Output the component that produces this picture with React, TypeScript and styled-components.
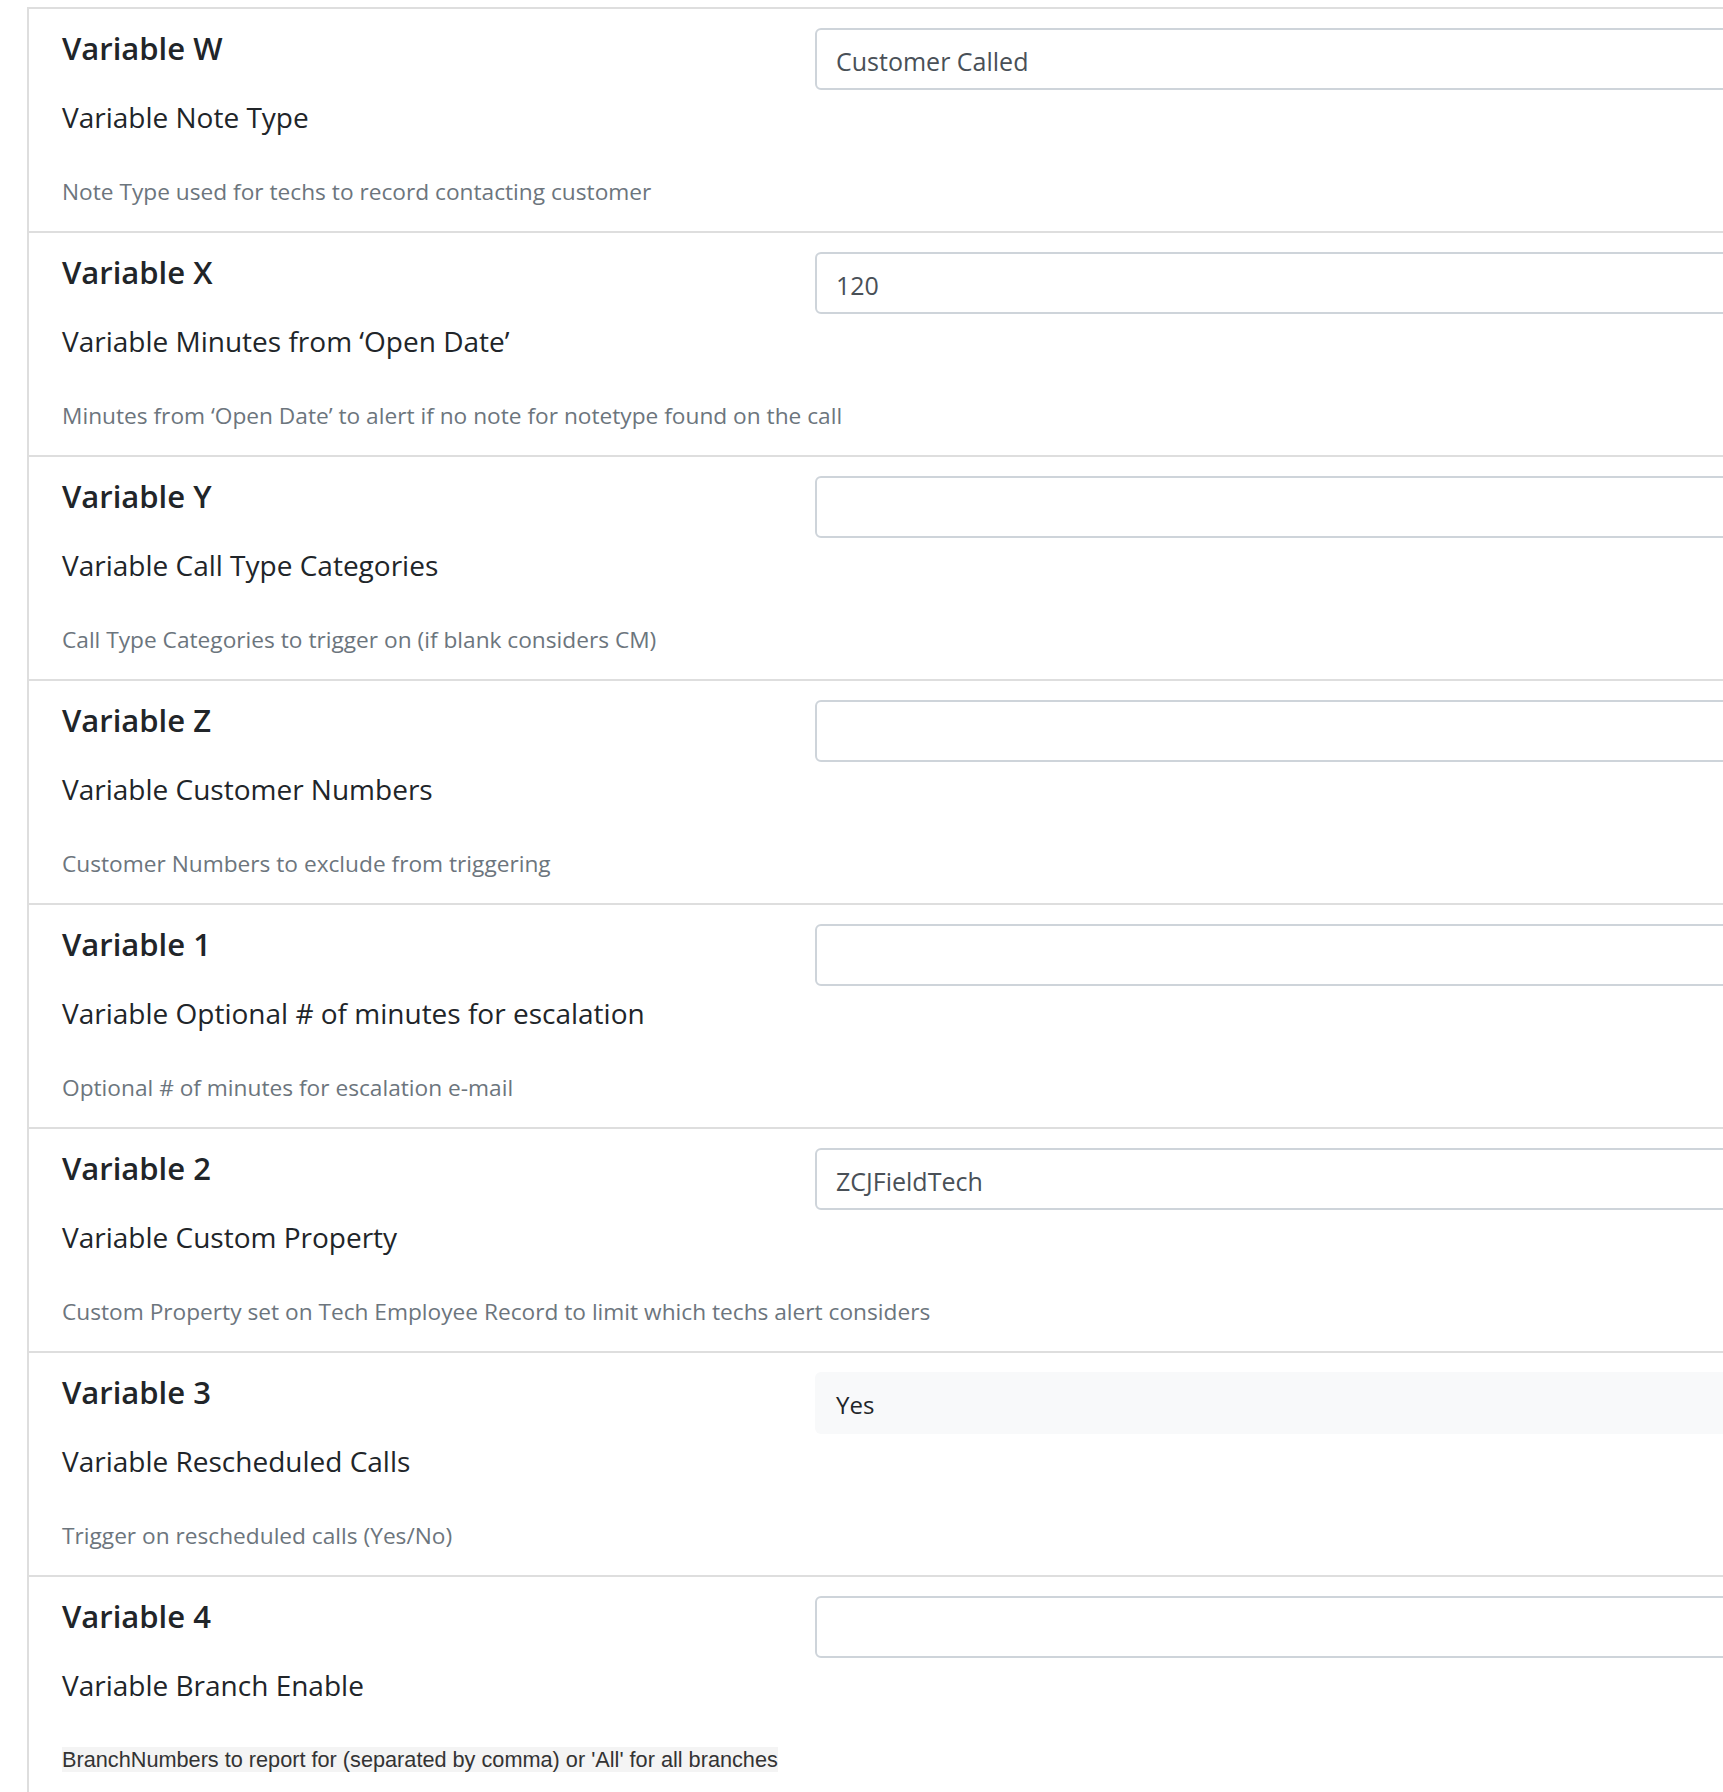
import React from 'react';
import styled, { createGlobalStyle } from 'styled-components';

const GlobalStyle = createGlobalStyle`
  html, body {
    margin: 0;
    padding: 0;
    background: #ffffff;
    overflow: hidden;
  }
  body {
    font-family: 'Open Sans', 'Noto Sans', sans-serif;
    color: #212529;
  }
`;

interface Setting {
  code: string;
  label: string;
  help: string;
  value: string;
  readOnly?: boolean;
  legacy?: boolean;
}

const settings: Setting[] = [
  {
    code: 'W',
    label: 'Variable Note Type',
    help: 'Note Type used for techs to record contacting customer',
    value: 'Customer Called',
  },
  {
    code: 'X',
    label: 'Variable Minutes from ‘Open Date’',
    help: 'Minutes from ‘Open Date’ to alert if no note for notetype found on the call',
    value: '120',
  },
  {
    code: 'Y',
    label: 'Variable Call Type Categories',
    help: 'Call Type Categories to trigger on (if blank considers CM)',
    value: '',
  },
  {
    code: 'Z',
    label: 'Variable Customer Numbers',
    help: 'Customer Numbers to exclude from triggering',
    value: '',
  },
  {
    code: '1',
    label: 'Variable Optional # of minutes for escalation',
    help: 'Optional # of minutes for escalation e-mail',
    value: '',
  },
  {
    code: '2',
    label: 'Variable Custom Property',
    help: 'Custom Property set on Tech Employee Record to limit which techs alert considers',
    value: 'ZCJFieldTech',
  },
  {
    code: '3',
    label: 'Variable Rescheduled Calls',
    help: 'Trigger on rescheduled calls (Yes/No)',
    value: 'Yes',
    readOnly: true,
  },
  {
    code: '4',
    label: 'Variable Branch Enable',
    help: "BranchNumbers to report for (separated by comma) or 'All' for all branches",
    value: '',
    legacy: true,
  },
];

const App: React.FC = () => (
  <>
    <GlobalStyle />
    <SPage>
      <SCard>
        {settings.map((item) => (
          <SRow key={item.code}>
            <SInfo>
              <STitle>Variable {item.code}</STitle>
              <SLabel>{item.label}</SLabel>
              <SHelpLine>
                {item.legacy ? <SLegacyHelp>{item.help}</SLegacyHelp> : <SHelp>{item.help}</SHelp>}
              </SHelpLine>
            </SInfo>
            <SField>
              {item.readOnly ? (
                <SPlain>{item.value}</SPlain>
              ) : (
                <SInput defaultValue={item.value} />
              )}
            </SField>
          </SRow>
        ))}
      </SCard>
    </SPage>
  </>
);

const SPage = styled.div`
  padding: 7px 0 0 27px;
  width: 2300px;
`;

const SCard = styled.div`
  border-left: 2px solid #dedede;
  background: #ffffff;
`;

const SRow = styled.div`
  box-sizing: border-box;
  height: 224px;
  border-top: 2px solid #dedede;
  padding-top: 19px;
  display: grid;
  grid-template-columns: 786px 1fr;
`;

const SInfo = styled.div`
  padding-left: 33px;
  display: flex;
  flex-direction: column;
`;

const STitle = styled.h4`
  margin: 0;
  font-size: 31px;
  font-weight: 600;
  line-height: 40px;
  color: #212529;
`;

const SLabel = styled.h5`
  margin: 32px 0 0;
  font-size: 28px;
  font-weight: 400;
  line-height: 34px;
  color: #212529;
`;

const SHelpLine = styled.div`
  margin-top: 43px;
  line-height: 30px;
  height: 30px;
  white-space: nowrap;
`;

const SHelp = styled.small`
  font-size: 22.7px;
  color: #6c757d;
`;

const SLegacyHelp = styled.span`
  font-family: 'Liberation Sans', Arial, sans-serif;
  font-size: 21.7px;
  color: #333333;
  background: #f4f4f4;
`;

const SField = styled.div`
  display: flex;
  align-items: flex-start;
`;

const SInput = styled.input`
  box-sizing: border-box;
  width: 1200px;
  height: 62px;
  padding: 3px 19px 0;
  border: 2px solid #ced4da;
  border-radius: 6px;
  font-family: 'Open Sans', 'Noto Sans', sans-serif;
  font-size: 25px;
  color: #495057;
  background: #ffffff;
  outline: none;
`;

const SPlain = styled.div`
  box-sizing: border-box;
  width: 1200px;
  height: 62px;
  padding: 3px 21px 0;
  border-radius: 6px;
  display: flex;
  align-items: center;
  font-size: 24px;
  color: #212529;
  background: #f8f9fa;
`;

export default App;
